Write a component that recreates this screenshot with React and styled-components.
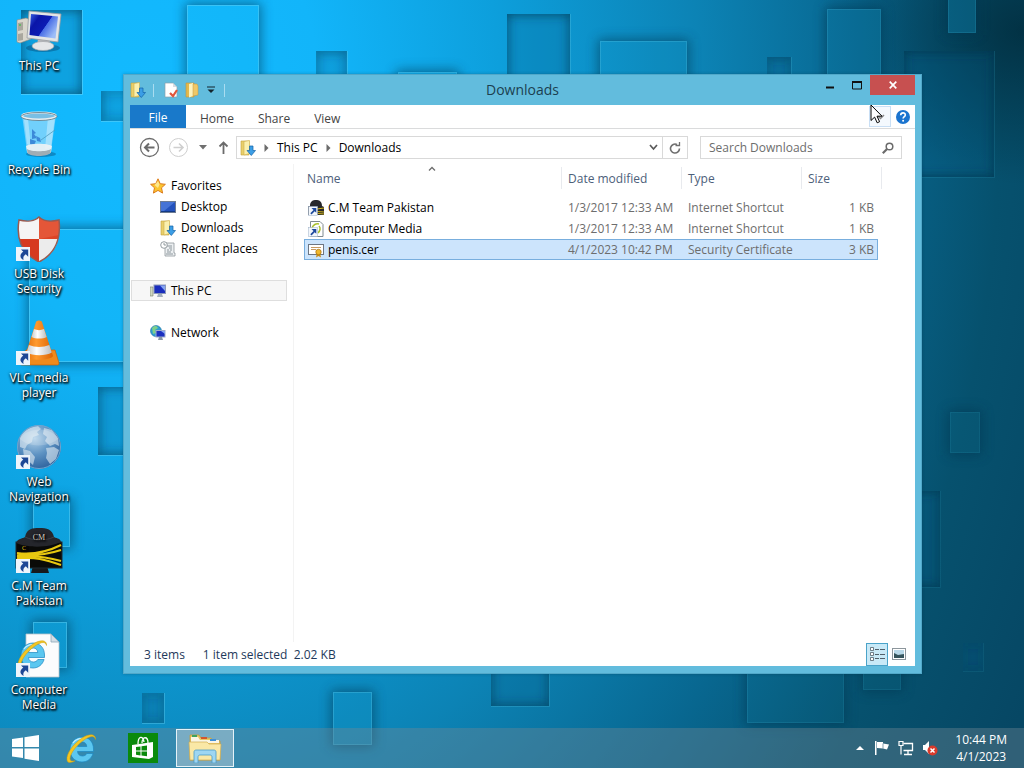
import { useState } from 'react';
import styled, { createGlobalStyle, css } from 'styled-components';

const GlobalStyle = createGlobalStyle`
    * { box-sizing: border-box; }

    body {
        margin: 0;
        overflow: hidden;
        font: 12px/15px "Open Sans", "Noto Sans", sans-serif;
        color: #000;
        cursor: default;
    }

    button, input {
        font: inherit;
        color: inherit;
        margin: 0;
        padding: 0;
        border: 0;
        background: none;
    }

    a { color: inherit; text-decoration: none; }
    svg { display: block; flex: none; }
    ul { list-style: none; margin: 0; padding: 0; }
`;

/* ---------- wallpaper ---------- */

const raisedBlocks = [
    [187, 5, 72, 120], [600, 41, 87, 80], [398, 72, 59, 40], [827, 9, 54, 100], [948, -20, 28, 53],
    [950, 412, 30, 41], [29, 229, 160, 133], [333, 692, 39, 53], [747, 600, 97, 123], [863, 640, 38, 50],
    [33, 500, 37, 47], [33, 622, 34, 46],
];

const sunkBlocks = [
    [21, 10, 61, 84], [101, 91, 60, 30], [507, 14, 63, 100], [316, 51, 31, 60], [767, 57, 24, 60],
    [904, 51, 90, 126], [98, 387, 60, 68], [880, 491, 60, 96], [963, 643, 20, 28], [142, 693, 22, 30],
    [491, 640, 58, 66],
];

const WallpaperSvg = styled.svg`
    position: absolute;
    inset: 0;
    width: 100%;
    height: 100%;
`;

function Wallpaper() {
    return (
        <WallpaperSvg viewBox="0 0 1024 768" preserveAspectRatio="xMidYMid slice" aria-hidden="true">
            <defs>
                <radialGradient id="wall" gradientUnits="userSpaceOnUse" cx="0" cy="0" r="1000" gradientTransform="translate(140 100) scale(1 1.300)">
                    <stop offset="0" stopColor="#12baff" />
                    <stop offset="0.18" stopColor="#12b5fa" />
                    <stop offset="0.36" stopColor="#0d9fdc" />
                    <stop offset="0.56" stopColor="#0c83b5" />
                    <stop offset="0.72" stopColor="#086790" />
                    <stop offset="0.86" stopColor="#06516e" />
                    <stop offset="1" stopColor="#064764" />
                </radialGradient>
                <radialGradient id="corner" cx="1" cy="0.04" r="0.2">
                    <stop offset="0" stopColor="#00222f" stopOpacity="0.65" />
                    <stop offset="1" stopColor="#00222f" stopOpacity="0" />
                </radialGradient>
                <linearGradient id="edge" gradientUnits="userSpaceOnUse" x1="0" y1="0" x2="1024" y2="300">
                    <stop offset="0" stopColor="#6fdcff" stopOpacity="0.9" />
                    <stop offset="0.6" stopColor="#3fb3d8" stopOpacity="0.7" />
                    <stop offset="1" stopColor="#1d7f9c" stopOpacity="0.4" />
                </linearGradient>
                <filter id="soft" x="-40%" y="-40%" width="180%" height="180%">
                    <feGaussianBlur stdDeviation="6" />
                </filter>
                <filter id="inset">
                    <feFlood floodColor="#003048" floodOpacity="0.8" />
                    <feComposite in2="SourceAlpha" operator="out" />
                    <feGaussianBlur stdDeviation="6" />
                    <feComposite in2="SourceAlpha" operator="in" />
                </filter>
            </defs>
            <rect width="1024" height="768" fill="url(#wall)" />
            <rect width="1024" height="768" fill="url(#corner)" />
            {sunkBlocks.map(([x, y, w, h]) => (
                <g key={`${x}-${y}`}>
                    <rect x={x} y={y} width={w} height={h} fill="#04608a" opacity="0.25" />
                    <rect x={x} y={y} width={w} height={h} filter="url(#inset)" />
                    <path d={`M${x} ${y + h + 0.5}H${x + w + 0.5}V${y}`} fill="none" stroke="url(#edge)" opacity="0.6" />
                </g>
            ))}
            {raisedBlocks.map(([x, y, w, h]) => (
                <g key={`${x}-${y}`}>
                    <rect x={x - 2} y={y - 2} width={w + 4} height={h + 4} fill="#00344f" opacity="0.55" filter="url(#soft)" />
                    <rect x={x} y={y} width={w} height={h} fill="url(#wall)" />
                    <rect x={x} y={y} width={w} height={h} fill="#2ab4e0" opacity="0.06" />
                    <rect x={x + 0.5} y={y + 0.5} width={w - 1} height={h - 1} fill="none" stroke="url(#edge)" opacity="0.6" />
                </g>
            ))}
        </WallpaperSvg>
    );
}

/* ---------- icons ---------- */

function ShortcutArrow() {
    return (
        <g>
            <rect x="1" y="33" width="14" height="14" fill="#eef4fb" />
            <path d="M6 35.500h7.200v7.200l-2.400-2.400c-2.300 1.600-2.900 3.200-2.200 5.700-4.300-2-4-6.100-.3-8.200z" fill="#1d4796" />
        </g>
    );
}

function PcIcon() {
    return (
        <svg width="48" height="48" viewBox="0 0 48 48">
            <defs>
                <linearGradient id="pcScreen" x1="0" y1="0" x2="1" y2="0.600">
                    <stop offset="0" stopColor="#3a63e6" />
                    <stop offset="0.3" stopColor="#0a15a8" />
                    <stop offset="0.62" stopColor="#0c1cb4" />
                    <stop offset="0.64" stopColor="#4a6fe6" />
                    <stop offset="1" stopColor="#9dbdf8" />
                </linearGradient>
            </defs>
            <ellipse cx="28" cy="42" rx="17" ry="4" fill="#024" opacity="0.3" />
            <path d="M2 14l9-2 5 2v19L5 37l-3-1z" fill="#d9d6cc" stroke="#8f8c84" strokeWidth="0.6" />
            <path d="M3 17l5-1v8l-5 1zM3 28l5-1v7l-5 1z" fill="#a9a79e" />
            <circle cx="5" cy="19" r="1" fill="#5b5" />
            <path d="M23 33h11l2 6H22z" fill="#b9bbbd" />
            <ellipse cx="28" cy="40" rx="11" ry="4.500" fill="#e4e6e8" stroke="#9a9ea3" strokeWidth="0.6" />
            <path d="M14 5l32 3-3 28-31-4z" fill="#e3e5e6" stroke="#979ba0" strokeWidth="0.8" />
            <path d="M16 8l27 2.500-2.500 22L14.500 29z" fill="url(#pcScreen)" />
        </svg>
    );
}

function BinIcon() {
    return (
        <svg width="48" height="48" viewBox="0 0 48 48">
            <ellipse cx="26" cy="44" rx="15" ry="3" fill="#024" opacity="0.3" />
            <path d="M7 5l5 36c.5 5 23 5 24 0l5-36z" fill="#cfeafb" opacity="0.5" />
            <path d="M33 7l-3 32 6-1 4-31z" fill="#fff" opacity="0.35" />
            <path d="M9 10l3 24 4 3-3-28z" fill="#fff" opacity="0.35" />
            <path d="M17 19l4 4-2 1 3 4-5 1zM25 28l-4-2 1 5 4 1zM15 29l6 2-2 4-4-1z" fill="#1f63c4" opacity="0.65" />
            <path d="M40 20L26 30" stroke="#4e9cc0" strokeWidth="0.8" />
            <path d="M11 36c5-3 21-3 26 0l-1 6c-1 4-23 4-24 0z" fill="#eef2f4" opacity="0.9" />
            <path d="M12 39c4 3 20 3 24 0l-.6 4c-3 4-20 4-23 0z" fill="#9fadb5" />
            <ellipse cx="24" cy="6" rx="17" ry="3.500" fill="#79bfe4" stroke="#e9eef1" strokeWidth="2" />
            <ellipse cx="24" cy="6.500" rx="18" ry="4" fill="none" stroke="#58727f" strokeWidth="0.8" />
        </svg>
    );
}

function ShieldIcon() {
    return (
        <svg width="48" height="48" viewBox="0 0 48 48">
            <clipPath id="shieldClip">
                <path d="M24 3c4 4 12 5 20 3 2 18-2 33-20 42C6 39 1 24 4 6c8 2 16 1 20-3z" />
            </clipPath>
            <g clipPath="url(#shieldClip)">
                <rect width="24" height="25" fill="#f5f5f5" />
                <rect x="24" width="24" height="25" fill="#dd4426" />
                <rect y="25" width="24" height="25" fill="#d63a20" />
                <rect x="24" y="25" width="24" height="25" fill="#ececec" />
                <path d="M24 3h20v18L24 25z" fill="#f0785c" opacity="0.35" />
            </g>
            <path d="M24 3c4 4 12 5 20 3 2 18-2 33-20 42C6 39 1 24 4 6c8 2 16 1 20-3z" fill="none" stroke="#9a5a50" strokeWidth="1.500" />
            <ShortcutArrow />
        </svg>
    );
}

function ConeIcon() {
    return (
        <svg width="48" height="48" viewBox="0 0 48 48">
            <defs>
                <linearGradient id="cone">
                    <stop offset="0" stopColor="#e06a08" />
                    <stop offset="0.4" stopColor="#ff9a2e" />
                    <stop offset="1" stopColor="#dd6404" />
                </linearGradient>
                <linearGradient id="coneWhite">
                    <stop offset="0" stopColor="#c9c9c9" />
                    <stop offset="0.4" stopColor="#fff" />
                    <stop offset="1" stopColor="#bdbdbd" />
                </linearGradient>
            </defs>
            <path d="M11 32h29l4 13c0 2-1 2-2 2H7c-2 0-2-1-2-2z" fill="#f08a1c" stroke="#c96207" strokeWidth="0.700" />
            <path d="M21 4c1-2 5-2 6 0l11 34c-3 5-25 5-28 0z" fill="url(#cone)" />
            <path d="M19 11c3 1.500 7 1.500 10 0l2.700 8c-4 2-11 2-15.200 0z" fill="url(#coneWhite)" />
            <path d="M14 27c6 2.600 14 2.600 20.300 0l2.500 7.500c-6 3.500-19 3.500-25.200 0z" fill="url(#coneWhite)" />
            <ShortcutArrow />
        </svg>
    );
}

function GlobeIcon() {
    return (
        <svg width="48" height="48" viewBox="0 0 48 48">
            <defs>
                <radialGradient id="globe" cx="0.4" cy="0.3" r="0.75">
                    <stop offset="0" stopColor="#b4d3ea" />
                    <stop offset="0.5" stopColor="#5e93c3" />
                    <stop offset="1" stopColor="#2b5f9a" />
                </radialGradient>
            </defs>
            <circle cx="24" cy="25" r="22" fill="url(#globe)" />
            <path d="M5 15c4-7 11-10 18-11l3 3-4 3 2 3-6 2-1 5-5 3-2 4-5-2zM29 6l8 2 6 8 1 8-4-2-5 2-5-5 2-4-4-3zM31 26l8-1 5 3-3 9-6 5-4-6 1-5zM8 27l7 2 5 6-2 8-9-8z" fill="#e3edf3" opacity="0.6" />
            <path d="M5 17c6-11 30-14 38 0-9 8-29 9-38 0z" fill="#fff" opacity="0.18" />
            <circle cx="24" cy="25" r="21.500" fill="none" stroke="#6fa5cf" />
            <ShortcutArrow />
        </svg>
    );
}

function TeamIcon() {
    return (
        <svg width="48" height="48" viewBox="0 0 48 48">
            <path d="M18 40h14l2 7H16z" fill="#17191c" />
            <rect x="1" y="16" width="46" height="26" fill="#0a0a08" stroke="#1f2a30" />
            <path d="M2 27c16 2 30-1 44-8M2 29c16 1 32-1 44-5M2 31c16-2 30 0 44 4M2 33c16-3 30 1 44 6" fill="none" stroke="#e8c810" strokeWidth="2" />
            <path d="M1 17c2-5 6-4 9-6 2-9 8-9 14-9 8 0 13 1 15 9 4 2 6 1 7 5-12 6-34 6-45 1z" fill="#25262c" />
            <path d="M10 11c8 4 21 4 29 0" fill="none" stroke="#3e4048" />
            <text x="24" y="14" textAnchor="middle" fontSize="8" fontFamily="Liberation Serif, serif" fill="#d8cfc2">CM</text>
            <text x="7" y="24" fontSize="6" fontFamily="Liberation Serif, serif" fill="#e4c410">C</text>
            <ShortcutArrow />
        </svg>
    );
}

function IeShape() {
    return (
        <g>
            <path fillRule="evenodd" d="M17 5c7 0 11.500 5 11.500 12v2.500H12.500c.3 3 2.300 4.500 5 4.500 2 0 3.500-.9 4.300-2.500h6.300C26.500 26.500 22.500 30 17 30 9.500 30 5 24.500 5 17.500S10 5 17 5zm-4.400 9.500h9.200C21.500 11.500 19.700 10 17.200 10s-4.200 1.500-4.600 4.500z" fill="#5bc7f0" stroke="#1c86c0" strokeWidth="0.700" />
            <path d="M8 11c3-4 7-5 11-4" fill="none" stroke="#c6efff" strokeWidth="1.200" />
            <path d="M30.500 7.500C31 1.500 24 1.500 17 6 8 12 1 22 2 28c.5 3.500 4.500 3 8 .8-3 .6-5 .3-5-2C5 21 13 11.500 20.500 7c5-3 9-3.800 10 .5z" fill="#f3c622" stroke="#c99a10" strokeWidth="0.500" />
        </g>
    );
}

function IePageIcon() {
    return (
        <svg width="48" height="48" viewBox="0 0 48 48">
            <path d="M11 4h25l8 8v35H11z" fill="#fbfcfd" stroke="#b8c4cc" strokeWidth="0.800" />
            <path d="M36 4v8h8z" fill="#d3dee6" stroke="#8ea7b7" strokeWidth="0.800" />
            <g transform="translate(1 8)"><IeShape /></g>
            <ShortcutArrow />
        </svg>
    );
}

function FolderDownIcon() {
    return (
        <svg width="16" height="16" viewBox="0 0 16 16">
            <path d="M1 1h8v14H1z" fill="#e9cf6c" stroke="#c5a13c" strokeWidth="0.600" />
            <path d="M4 1.500l5.500-1v13L4 15z" fill="#fbf0ae" stroke="#cfae4c" strokeWidth="0.600" />
            <path d="M9.500 6h3.500v4.500h2.500L11.300 15.500 7 10.500h2.500z" fill="#3b9ee6" stroke="#1263a8" strokeWidth="0.700" />
        </svg>
    );
}

function FolderIcon() {
    return (
        <svg width="16" height="16" viewBox="0 0 16 16">
            <path d="M2 1h8v14H2z" fill="#e3b94c" stroke="#c5963c" strokeWidth="0.600" />
            <path d="M5 2l4-1v13l-4 1.500z" fill="#fdf3bd" />
            <path d="M9 2h4l1 2v9l-5 1z" fill="#efc867" stroke="#c5963c" strokeWidth="0.500" />
        </svg>
    );
}

function PropertiesIcon() {
    return (
        <svg width="16" height="16" viewBox="0 0 16 16">
            <path d="M2 1h8l4 4v10H2z" fill="#fff" stroke="#8aa0ae" strokeWidth="0.700" />
            <path d="M10 1v4h4z" fill="#d4dde3" />
            <path d="M7 11l3 3 4-6" fill="none" stroke="#e2553a" strokeWidth="2.200" />
        </svg>
    );
}

function StarIcon() {
    return (
        <svg width="16" height="16" viewBox="0 0 16 16">
            <path d="M8 .8l2.200 4.900 5.200.6-3.900 3.500 1.100 5.300L8 12.400l-4.600 2.700 1.100-5.300L.6 6.300l5.200-.6z" fill="#fbc52f" stroke="#dc7b1c" />
            <path d="M8 3l1.500 3.500L8 10 4.500 7z" fill="#fff0a5" opacity="0.8" />
        </svg>
    );
}

function DesktopIcon() {
    return (
        <svg width="16" height="16" viewBox="0 0 16 16">
            <rect x="0.500" y="2.500" width="15" height="11" fill="#2352bd" stroke="#6c7b93" />
            <path d="M1 3h14L4 12H1z" fill="#5c8be6" opacity="0.6" />
            <path d="M1 12.500h14" stroke="#123a86" />
        </svg>
    );
}

function RecentIcon() {
    return (
        <svg width="16" height="16" viewBox="0 0 16 16">
            <path d="M5 2h9v10h1v3H5z" fill="#eceff1" stroke="#8f979c" strokeWidth="0.800" />
            <path d="M7 5h5M9 7h3M7 9h2M10 9h2M7 11h4M6 13h7" stroke="#8d979d" />
            <circle cx="4" cy="4" r="3.300" fill="#fff" stroke="#8a9399" strokeWidth="0.900" />
            <path d="M4 2v2h2" fill="none" stroke="#7a858c" strokeWidth="0.800" />
        </svg>
    );
}

function SmallPcIcon() {
    return (
        <svg width="16" height="16" viewBox="0 0 16 16">
            <path d="M0 4h3v9H0z" fill="#cfd6c2" stroke="#75806a" strokeWidth="0.600" />
            <rect x="4" y="2" width="11.500" height="8.500" fill="#1a2dbd" stroke="#8b98b8" />
            <path d="M10 2.500h5V8z" fill="#86a5f2" />
            <path d="M8 11h4l1 3H7z" fill="#a3afbd" />
        </svg>
    );
}

function NetworkIcon() {
    return (
        <svg width="16" height="16" viewBox="0 0 16 16">
            <circle cx="6" cy="6" r="5.500" fill="#2f9ed0" stroke="#2170a0" strokeWidth="0.600" />
            <path d="M2 3c3-3 5-2 6 0L5 5l1 3-3 1z" fill="#7ed08a" />
            <rect x="6" y="5.500" width="9" height="6.500" fill="#1b30c0" stroke="#9dabcb" />
            <path d="M11 6h4v3z" fill="#86a5f2" />
            <path d="M9 12h3l1 3H8z" fill="#8997a8" />
        </svg>
    );
}

function TinyArrow() {
    return (
        <g>
            <rect x="0.500" y="6.500" width="9" height="9" fill="#f2f6fb" stroke="#9cb0c8" strokeWidth="0.500" />
            <path d="M3.500 8h4.800v4.800L6.700 11.200 3.500 14.500l-1.200-1.200 3.200-3.200z" fill="#1c489c" />
        </g>
    );
}

function TeamFileIcon() {
    return (
        <svg width="16" height="16" viewBox="0 0 16 16">
            <path d="M0 6h2c0-5 3-6 6-6s6 1 6 6l2 1v8H0z" fill="#26272a" />
            <path d="M9 9l7-1M9 11.500l7 .5M10 13.500l6 .5" stroke="#d2b51c" />
            <TinyArrow />
        </svg>
    );
}

function PageFileIcon() {
    return (
        <svg width="16" height="16" viewBox="0 0 16 16">
            <path d="M2.500 .5h9.500l3 3v12H2.500z" fill="#fff" stroke="#7f8a90" />
            <path d="M4 7c1-3 4-5 7-4M11 5c2 2 1 5-1 7" fill="none" stroke="#a9c02d" strokeWidth="1.500" />
            <TinyArrow />
        </svg>
    );
}

function CertIcon() {
    return (
        <svg width="16" height="16" viewBox="0 0 16 16">
            <rect x="0.500" y="2.500" width="15" height="10" fill="#fff" stroke="#6d7683" />
            <path d="M3 5.500h10M3 7.500h5" stroke="#c79a62" />
            <path d="M9 11l-1 4.500 2.500-1.500 2.500 1.500-1-4.500z" fill="#c98d14" />
            <circle cx="10.500" cy="10" r="2.700" fill="#f0b92e" stroke="#a86e0c" strokeWidth="0.700" />
        </svg>
    );
}

/* ---------- desktop ---------- */

const Desktop = styled.div`
    position: relative;
    display: flex;
    flex-direction: column;
    height: 100vh;
    overflow: hidden;
`;

const Workspace = styled.main`
    position: relative;
    flex: 1;
    min-height: 0;
`;

const Shortcuts = styled.ul`
    display: grid;
    grid-auto-rows: 104px;
    width: 78px;
`;

const Shortcut = styled.a`
    display: flex;
    flex-direction: column;
    align-items: center;
    gap: 4px;
    padding-top: 6px;
    color: #fff;
    text-align: center;
    text-shadow: 1px 1px 2px #000, 0 0 3px rgba(0, 0, 0, 0.8), 1px 2px 2px rgba(0, 0, 0, 0.7);
`;

const ShortcutLabel = styled.span`
    width: 76px;
`;

const shortcuts = [
    { label: 'This PC', Icon: PcIcon },
    { label: 'Recycle Bin', Icon: BinIcon },
    { label: 'USB Disk Security', Icon: ShieldIcon },
    { label: 'VLC media player', Icon: ConeIcon },
    { label: 'Web Navigation', Icon: GlobeIcon },
    { label: 'C.M Team Pakistan', Icon: TeamIcon },
    { label: 'Computer Media', Icon: IePageIcon },
];

/* ---------- window ---------- */

const Window = styled.section`
    position: absolute;
    inset: 74px 102px 54px 123px;
    display: flex;
    flex-direction: column;
    padding: 0 6px 7px;
    background: #62bcdd;
    border: 1px solid #51a8c9;
    box-shadow: 0 0 3px rgba(0, 40, 60, 0.3);
`;

const TitleBar = styled.header`
    display: grid;
    grid-template-columns: 1fr auto 1fr;
    height: 30px;
`;

const QuickAccess = styled.div`
    display: flex;
    align-items: center;
    gap: 5px;
`;

const QuickDivider = styled.span`
    width: 1px;
    height: 13px;
    margin: 0 4px 0 2px;
    background: #a9dcf0;
`;

const IconButton = styled.button`
    display: flex;
    align-items: center;
    justify-content: center;
    min-width: 12px;
`;

const Title = styled.h1`
    margin: 0;
    font-size: 14px;
    font-weight: 400;
    line-height: 29px;
    color: #1c3f50;
`;

const WindowButtons = styled.div`
    display: flex;
    justify-content: flex-end;
    align-items: flex-start;
`;

const WindowButton = styled.button`
    display: flex;
    align-items: center;
    justify-content: center;
    width: ${({ $close }) => ($close ? 45 : 27)}px;
    height: 20px;
    background: ${({ $close }) => ($close ? '#c75050' : 'none')};
`;

const Content = styled.div`
    flex: 1;
    display: flex;
    flex-direction: column;
    min-height: 0;
    background: #fff;
`;

const Ribbon = styled.div`
    display: flex;
    height: 24px;
    border-bottom: 1px solid #dadbdc;
`;

const Tab = styled.button`
    height: 23px;
    padding: 3px 12px 0;
    color: #444;

    ${({ $file }) => $file && css`
        width: 56px;
        margin-right: 2px;
        padding: 1px 0 0;
        background: #1979ca;
        color: #fff;
    `}
`;

const RibbonTools = styled.div`
    display: flex;
    align-items: center;
    gap: 4px;
    margin-left: auto;
    padding-right: 4px;
`;

const RibbonToggle = styled.button`
    position: relative;
    display: flex;
    align-items: center;
    justify-content: center;
    width: 22px;
    height: 21px;
    border: 1px solid #c9dff5;
    background: #f4f9fe;
`;

const Pointer = styled.svg`
    position: absolute;
    left: 0;
    top: -3px;
`;

const NavRow = styled.div`
    display: flex;
    align-items: center;
    padding: 7px 13px 5px 9px;
`;

const NavButtons = styled.div`
    display: flex;
    align-items: center;
    gap: 8px;
    margin-right: 7px;
`;

const AddressBar = styled.div`
    flex: 1;
    display: flex;
    align-items: center;
    height: 23px;
    margin-right: 12px;
    padding-left: 3px;
    border: 1px solid #d9d9d9;
`;

const Crumb = styled.button`
    margin: 0 8px;
`;

const AddressMenu = styled(IconButton)`
    width: 18px;
    margin-left: auto;
`;

const Refresh = styled(IconButton)`
    width: 25px;
    height: 21px;
    border-left: 1px solid #d9d9d9;
`;

const Search = styled.label`
    display: flex;
    align-items: center;
    width: 202px;
    height: 23px;
    padding: 0 7px 0 8px;
    border: 1px solid #d9d9d9;
`;

const SearchInput = styled.input`
    flex: 1;
    min-width: 0;
    outline: none;

    &::placeholder { color: #6d6d6d; opacity: 1; }
`;

const Panes = styled.div`
    flex: 1;
    display: flex;
    min-height: 0;
`;

const Sidebar = styled.nav`
    width: 164px;
    padding: 11px 6px 0 1px;
    border-right: 1px solid #f3f3f3;
`;

const TreeGroup = styled.ul`
    margin-bottom: 21px;
`;

const TreeItem = styled.a`
    display: flex;
    align-items: center;
    gap: 5px;
    height: 21px;
    padding-left: ${({ $nested }) => ($nested ? 28 : 18)}px;
    border: 1px solid ${({ $active }) => ($active ? '#dedede' : 'transparent')};
    background: ${({ $active }) => ($active ? '#f7f7f7' : 'none')};
`;

const FilePane = styled.div`
    flex: 1;
    padding: 3px 0 0 10px;
`;

const FileTable = styled.table`
    width: 578px;
    table-layout: fixed;
    border-spacing: 0;
`;

const HeadCell = styled.th`
    position: relative;
    height: 22px;
    padding: 0 0 0 ${({ $first }) => ($first ? 3 : 6)}px;
    border-right: 1px solid #e8eaee;
    text-align: left;
    font-weight: 400;
    color: #4c607a;
`;

const SortMark = styled.svg`
    position: absolute;
    top: -1px;
    left: 50%;
    margin-left: -5px;
`;

const FileRows = styled.tbody`
    &::before {
        content: "";
        display: block;
        height: 8px;
    }
`;

const Cell = styled.td`
    height: 21px;
    padding: 0 4px 0 6px;
    color: #6d6d6d;
    text-align: ${({ $end }) => ($end ? 'right' : 'left')};
    white-space: nowrap;
`;

const FileRow = styled.tr`
    ${({ $selected }) => $selected && css`
        ${Cell} {
            background: #cce4fc;
            box-shadow: inset 0 1px #78aede, inset 0 -1px #78aede;
        }

        ${Cell}:first-child {
            box-shadow: inset 1px 1px #78aede, inset 0 -1px #78aede;
        }

        ${Cell}:nth-child(4) {
            box-shadow: inset -1px 1px #78aede, inset 0 -1px #78aede;
        }
    `}
`;

const FileName = styled.div`
    display: flex;
    align-items: center;
    gap: 4px;
    margin-left: -2px;
    color: #000;
`;

const StatusBar = styled.footer`
    display: flex;
    align-items: center;
    gap: 18px;
    height: 24px;
    padding: 0 5px 0 14px;
    color: #1e395b;
`;

const ViewButtons = styled.div`
    display: flex;
    margin-left: auto;
`;

const ViewButton = styled.button`
    display: flex;
    align-items: center;
    justify-content: center;
    width: 22px;
    height: 23px;
    border: 1px solid ${({ $active }) => ($active ? '#4aa3c9' : 'transparent')};
    background: ${({ $active }) => ($active ? '#c8e9f7' : 'none')};
`;

/* ---------- taskbar ---------- */

const Taskbar = styled.footer`
    position: relative;
    display: flex;
    align-items: center;
    height: 40px;
    background: rgba(112, 134, 148, 0.4);
`;

const TaskButton = styled.button`
    display: flex;
    align-items: center;
    justify-content: center;
    width: ${({ $start }) => ($start ? 50 : 58)}px;
    height: 38px;
    margin: 0 ${({ $start }) => ($start ? 0 : 2)}px;

    ${({ $active }) => $active && css`
        border: 1px solid #e4f2f8;
        background: rgba(190, 205, 215, 0.5);
    `}
`;

const Tray = styled.div`
    display: flex;
    align-items: center;
    gap: 8px;
    margin-left: auto;
    padding-right: 17px;
    color: #fff;
`;

const Clock = styled.time`
    margin-left: 9px;
    line-height: 17px;
    text-align: center;
`;

const favorites = [
    { label: 'Desktop', Icon: DesktopIcon },
    { label: 'Downloads', Icon: FolderDownIcon },
    { label: 'Recent places', Icon: RecentIcon },
];

const files = [
    { name: 'C.M Team Pakistan', date: '1/3/2017 12:33 AM', type: 'Internet Shortcut', size: '1 KB', Icon: TeamFileIcon },
    { name: 'Computer Media', date: '1/3/2017 12:33 AM', type: 'Internet Shortcut', size: '1 KB', Icon: PageFileIcon },
    { name: 'penis.cer', date: '4/1/2023 10:42 PM', type: 'Security Certificate', size: '3 KB', Icon: CertIcon },
];

function CrumbArrow() {
    return (
        <svg width="5" height="8" viewBox="0 0 5 8"><path d="M.5 0v8L4.500 4z" fill="#6b6b6b" /></svg>
    );
}

function TitleArea() {
    return (
        <TitleBar>
            <QuickAccess>
                <FolderDownIcon />
                <QuickDivider />
                <IconButton aria-label="Properties"><PropertiesIcon /></IconButton>
                <IconButton aria-label="New folder"><FolderIcon /></IconButton>
                <IconButton aria-label="Customize toolbar">
                    <svg width="8" height="8" viewBox="0 0 8 8"><path d="M0 1h8" stroke="#12242e" /><path d="M.5 3.500h7L4 7z" fill="#12242e" /></svg>
                </IconButton>
                <QuickDivider />
            </QuickAccess>
            <Title>Downloads</Title>
            <WindowButtons>
                <WindowButton aria-label="Minimize">
                    <svg width="10" height="10" viewBox="0 0 10 10"><path d="M1 7.500h8" stroke="#111" strokeWidth="2" /></svg>
                </WindowButton>
                <WindowButton aria-label="Maximize">
                    <svg width="10" height="9" viewBox="0 0 10 9"><path d="M.5 .5h9v7.500h-9z" fill="none" stroke="#111" /><path d="M0 1h10" stroke="#111" strokeWidth="2" /></svg>
                </WindowButton>
                <WindowButton $close aria-label="Close">
                    <svg width="8" height="8" viewBox="0 0 8 8"><path d="M.7 .7l6.600 6.600M7.300 .7L.7 7.300" stroke="#fff" strokeWidth="1.700" /></svg>
                </WindowButton>
            </WindowButtons>
        </TitleBar>
    );
}

function RibbonArea() {
    return (
        <Ribbon>
            <Tab $file>File</Tab>
            <Tab>Home</Tab>
            <Tab>Share</Tab>
            <Tab>View</Tab>
            <RibbonTools>
                <RibbonToggle aria-label="Expand the ribbon">
                    <svg width="9" height="6" viewBox="0 0 9 6"><path d="M1 1l3.500 3.500L8 1" fill="none" stroke="#8a8a8a" strokeWidth="1.500" /></svg>
                    <Pointer width="13" height="20" viewBox="0 0 13 20" aria-hidden="true">
                        <path d="M1 1v15.500l3.600-3.400 2.600 5.700 2.400-1.100L7 12.200h5z" fill="#fff" stroke="#000" />
                    </Pointer>
                </RibbonToggle>
                <IconButton aria-label="Help">
                    <svg width="16" height="16" viewBox="0 0 16 16">
                        <circle cx="8" cy="8" r="7" fill="#1b74cf" />
                        <path d="M5.700 6.200c.1-3.200 4.700-3 4.600-.2 0 1.600-2.200 1.700-2.200 3.600" fill="none" stroke="#fff" strokeWidth="1.600" />
                        <circle cx="8.100" cy="11.800" r="1" fill="#fff" />
                    </svg>
                </IconButton>
            </RibbonTools>
        </Ribbon>
    );
}

function NavArea() {
    const [query, setQuery] = useState('');

    return (
        <NavRow>
            <NavButtons>
                <IconButton aria-label="Back">
                    <svg width="21" height="21" viewBox="0 0 21 21" fill="none" stroke="#6b6b6b">
                        <circle cx="10.500" cy="10.500" r="9" strokeWidth="1.300" />
                        <path d="M15.500 10.500H6.500M10 6.500l-4 4 4 4" strokeWidth="2" />
                    </svg>
                </IconButton>
                <IconButton aria-label="Forward">
                    <svg width="21" height="21" viewBox="0 0 21 21" fill="none" stroke="#cfcfcf">
                        <circle cx="10.500" cy="10.500" r="9" />
                        <path d="M5.500 10.500h9M11 6.500l4 4-4 4" strokeWidth="1.600" />
                    </svg>
                </IconButton>
                <IconButton aria-label="Recent locations">
                    <svg width="8" height="5" viewBox="0 0 8 5"><path d="M0 0h8L4 4.500z" fill="#6f6f6f" /></svg>
                </IconButton>
                <IconButton aria-label="Up">
                    <svg width="11" height="13" viewBox="0 0 11 13"><path d="M5.500 13V2M1.500 5.500l4-4 4 4" fill="none" stroke="#6b6b6b" strokeWidth="1.800" /></svg>
                </IconButton>
            </NavButtons>
            <AddressBar>
                <FolderDownIcon />
                <Crumb aria-label="Locations"><CrumbArrow /></Crumb>
                <span>This PC</span>
                <Crumb aria-label="This PC folders"><CrumbArrow /></Crumb>
                <span>Downloads</span>
                <AddressMenu aria-label="Previous locations">
                    <svg width="9" height="7" viewBox="0 0 9 7"><path d="M1 1l3.500 4L8 1" fill="none" stroke="#5a5a5a" strokeWidth="1.700" /></svg>
                </AddressMenu>
                <Refresh aria-label="Refresh">
                    <svg width="12" height="12" viewBox="0 0 12 12">
                        <path d="M10.500 6.500A4.500 4.500 0 1 1 8 2.500" fill="none" stroke="#6f6f6f" strokeWidth="1.600" />
                        <path d="M6.500 3.500h4V0" fill="none" stroke="#6f6f6f" strokeWidth="1.300" />
                    </svg>
                </Refresh>
            </AddressBar>
            <Search>
                <SearchInput
                    aria-label="Search Downloads"
                    placeholder="Search Downloads"
                    value={query}
                    onChange={(e) => setQuery(e.target.value)}
                />
                <svg width="12" height="12" viewBox="0 0 12 12" fill="none" stroke="#6b6b6b">
                    <circle cx="7.500" cy="4.500" r="3.300" strokeWidth="1.500" />
                    <path d="M5 7L.8 11.200" strokeWidth="2.200" />
                </svg>
            </Search>
        </NavRow>
    );
}

function FolderTree() {
    return (
        <Sidebar>
            <TreeGroup>
                <li><TreeItem href="#favorites"><StarIcon />Favorites</TreeItem></li>
                {favorites.map(({ label, Icon }) => (
                    <li key={label}><TreeItem $nested href={`#${label}`}><Icon />{label}</TreeItem></li>
                ))}
            </TreeGroup>
            <TreeGroup>
                <li><TreeItem $active href="#this-pc"><SmallPcIcon />This PC</TreeItem></li>
            </TreeGroup>
            <TreeGroup>
                <li><TreeItem href="#network"><NetworkIcon />Network</TreeItem></li>
            </TreeGroup>
        </Sidebar>
    );
}

function FileList() {
    const [selected, setSelected] = useState(2);

    return (
        <FilePane>
            <FileTable>
                <colgroup>
                    <col width="258" />
                    <col width="120" />
                    <col width="120" />
                    <col width="76" />
                    <col width="4" />
                </colgroup>
                <thead>
                    <tr>
                        <HeadCell $first>
                            Name
                            <SortMark width="8" height="5" viewBox="0 0 8 5"><path d="M1 4.500l3-3 3 3" fill="none" stroke="#6d6d6d" strokeWidth="1.300" /></SortMark>
                        </HeadCell>
                        <HeadCell>Date modified</HeadCell>
                        <HeadCell>Type</HeadCell>
                        <HeadCell colSpan="2">Size</HeadCell>
                    </tr>
                </thead>
                <FileRows>
                    {files.map(({ name, date, type, size, Icon }, i) => (
                        <FileRow key={name} $selected={i === selected} onClick={() => setSelected(i)}>
                            <Cell><FileName><Icon />{name}</FileName></Cell>
                            <Cell>{date}</Cell>
                            <Cell>{type}</Cell>
                            <Cell $end>{size}</Cell>
                        </FileRow>
                    ))}
                </FileRows>
            </FileTable>
        </FilePane>
    );
}

function StatusArea() {
    return (
        <StatusBar>
            <span>3 items</span>
            <span>1 item selected&nbsp; 2.02 KB</span>
            <ViewButtons>
                <ViewButton $active aria-label="Details view">
                    <svg width="16" height="14" viewBox="0 0 16 14" fill="none" stroke="#51606b">
                        <path d="M1.500 .5h3v3h-3zM1.500 5.500h3v3h-3zM1.500 10.500h3v3h-3z" fill="#fff" strokeWidth="0.800" />
                        <path d="M6 2.500h4M11 2.500h5M6 7.500h4M11 7.500h5M6 11.500h4M11 11.500h5" />
                    </svg>
                </ViewButton>
                <ViewButton aria-label="Thumbnail view">
                    <svg width="14" height="12" viewBox="0 0 14 12">
                        <rect x="0.500" y="0.500" width="13" height="11" fill="#fff" stroke="#8c969c" />
                        <rect x="2" y="2" width="10" height="8" fill="#b8d8e8" />
                        <path d="M2 5l4 2 6-1v4H2z" fill="#36545c" />
                    </svg>
                </ViewButton>
            </ViewButtons>
        </StatusBar>
    );
}

function TaskbarArea() {
    return (
        <Taskbar>
            <TaskButton $start aria-label="Start">
                <svg width="27" height="26" viewBox="0 0 27 26" fill="#fff">
                    <path d="M0 4l11-1.600V12H0zM12.500 2.200L27 0v12H12.500zM0 13.500h11V23L0 21.500zM12.500 13.500H27V26l-14.500-2.200z" />
                </svg>
            </TaskButton>
            <TaskButton aria-label="Internet Explorer">
                <svg width="32" height="32" viewBox="0 0 32 32"><IeShape /></svg>
            </TaskButton>
            <TaskButton aria-label="Store">
                <svg width="30" height="30" viewBox="0 0 30 30">
                    <rect width="30" height="30" fill="#0a8a0c" />
                    <path d="M10 11c0-8 5-9 6-2M14 10c0-7 6-7 6 0" fill="none" stroke="#fff" strokeWidth="1.300" />
                    <path d="M4 12l21-3v15l-4 2L4 24z" fill="#fff" />
                    <path d="M8 14l4.500-.6v4H8zM13.500 13.200l5.500-.7v4.900h-5.500zM8 18.400h4.500v4L8 21.800zM13.500 18.400H19v4.900l-5.500-.7z" fill="#0a8a0c" />
                </svg>
            </TaskButton>
            <TaskButton $active aria-label="File Explorer">
                <svg width="34" height="30" viewBox="0 0 34 30">
                    <path d="M2 2h9l2 3h10l2 3h7v19H2z" fill="#e8c668" stroke="#c29c3c" strokeWidth="0.800" />
                    <path d="M3 4h7l2 3h19v3H3z" fill="#fbf6e4" />
                    <path d="M4 2h5v2H4z" fill="#3fa35a" />
                    <path d="M13 4h6v2h-6z" fill="#d3562d" />
                    <path d="M22 6h6v2h-6z" fill="#3f8fd6" />
                    <path d="M1 9h18l2 2h12l-1 16H2z" fill="#fae8a6" stroke="#d0ad52" strokeWidth="0.700" />
                    <path d="M6 30V19c0-1 .6-2 2-2h18c1.400 0 2 1 2 2v11h-4v-6c0-1-.6-2-2-2H12c-1.400 0-2 1-2 2v6z" fill="#9ed6f2" stroke="#4b9cc8" strokeWidth="0.800" />
                </svg>
            </TaskButton>
            <Tray>
                <IconButton aria-label="Show hidden icons">
                    <svg width="8" height="4" viewBox="0 0 8 4"><path d="M4 0l4 4H0z" fill="#fff" /></svg>
                </IconButton>
                <IconButton aria-label="Action Center">
                    <svg width="16" height="16" viewBox="0 0 16 16" fill="#fff">
                        <path d="M1 1h1.500v14H1zM3 2h6v1.500l6 1-2 5-4-1-6-.5z" />
                        <path d="M9 3.500V8.500" stroke="#335f7a" strokeWidth="0.600" />
                    </svg>
                </IconButton>
                <IconButton aria-label="Network">
                    <svg width="16" height="16" viewBox="0 0 16 16" fill="none" stroke="#fff">
                        <path d="M5.500 3.500h9v7h-9M10 11v3M6 14.500h8" strokeWidth="1.300" />
                        <path d="M1 1.500h4v4H1zM3 5.500v9" strokeWidth="1.200" />
                    </svg>
                </IconButton>
                <IconButton aria-label="Volume muted">
                    <svg width="16" height="16" viewBox="0 0 16 16">
                        <path d="M1 5h2l4-4v13l-4-4H1z" fill="#fff" />
                        <circle cx="10.500" cy="10.500" r="5" fill="#d93a2b" />
                        <path d="M8.500 8.500l4 4M12.500 8.500l-4 4" stroke="#fff" strokeWidth="1.500" />
                    </svg>
                </IconButton>
                <Clock dateTime="2023-04-01T22:44">10:44 PM<br />4/1/2023</Clock>
            </Tray>
        </Taskbar>
    );
}

export default function App() {
    return (
        <Desktop>
            <GlobalStyle />
            <Wallpaper />
            <Workspace>
                <Shortcuts>
                    {shortcuts.map(({ label, Icon }) => (
                        <li key={label}>
                            <Shortcut href="#open">
                                <Icon />
                                <ShortcutLabel>{label}</ShortcutLabel>
                            </Shortcut>
                        </li>
                    ))}
                </Shortcuts>
                <Window aria-label="Downloads">
                    <TitleArea />
                    <Content>
                        <RibbonArea />
                        <NavArea />
                        <Panes>
                            <FolderTree />
                            <FileList />
                        </Panes>
                        <StatusArea />
                    </Content>
                </Window>
            </Workspace>
            <TaskbarArea />
        </Desktop>
    );
}
